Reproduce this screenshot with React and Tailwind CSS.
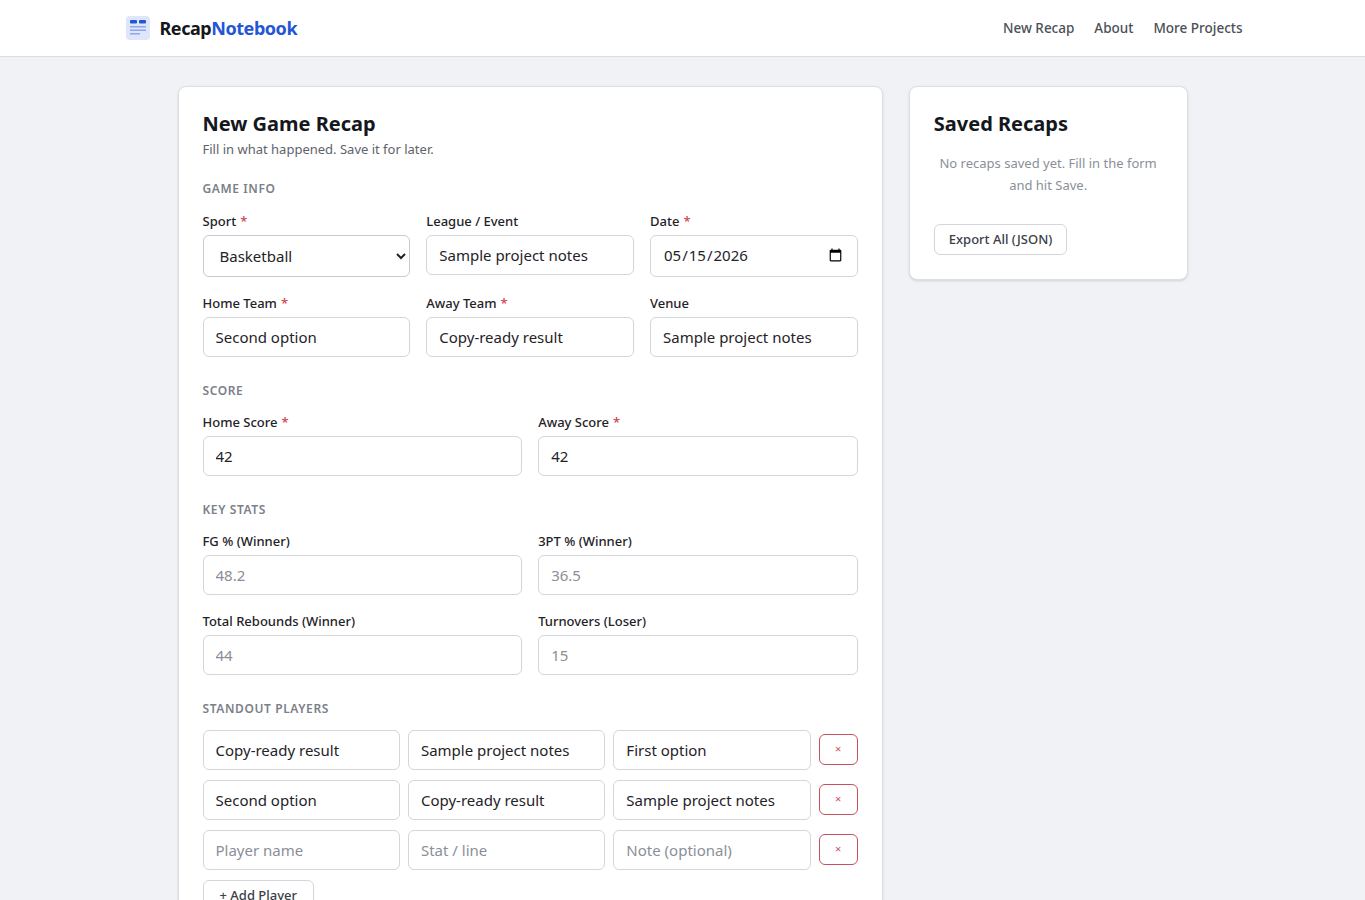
import React from "react";

const inp = "w-full h-10 rounded-md border border-[#d4d6db] bg-white px-3 text-[15px] text-[#1f2328] placeholder:text-[#8a8f98] outline-none";

function Label({ children, req }) {
  return (
    <div className="text-[13px] font-medium text-[#1f2328] mb-1 leading-5">
      {children}
      {req && <span className="text-[#d04050] ml-1">*</span>}
    </div>
  );
}

function Section({ children }) {
  return <div className="text-[12px] font-semibold tracking-wider text-[#7b8089] uppercase">{children}</div>;
}

function Field({ label, req, value, placeholder }) {
  return (
    <div>
      <Label req={req}>{label}</Label>
      <input className={inp} defaultValue={value} placeholder={placeholder} />
    </div>
  );
}

export default function App() {
  const players = [
    ["Copy-ready result", "Sample project notes", "First option"],
    ["Second option", "Copy-ready result", "Sample project notes"],
    ["", "", ""],
  ];
  return (
    <div className="min-h-screen bg-[#f1f2f5]" style={{ fontFamily: '"Noto Sans", "Open Sans", sans-serif' }}>
      <header className="h-[57px] bg-white border-b border-[#dcdee2]">
        <div className="max-w-[1120px] mx-auto h-full flex items-center justify-between">
          <div className="flex items-center gap-[10px] pl-[3px]">
            <svg width="24" height="24" viewBox="0 0 24 24">
              <rect x="0" y="0" width="24" height="24" rx="4" fill="#dfe6fb" />
              <rect x="4" y="4" width="7" height="3.5" rx="1" fill="#2356d6" />
              <rect x="13" y="4" width="7" height="3.5" rx="1" fill="#2356d6" />
              <rect x="4" y="10" width="16" height="1.5" fill="#8ea6ea" />
              <rect x="4" y="13.5" width="16" height="1.5" fill="#8ea6ea" />
              <rect x="4" y="17" width="10" height="1.5" fill="#8ea6ea" />
            </svg>
            <span className="text-[18px] font-bold text-[#14171c] tracking-tight">
              Recap<span className="text-[#2356d6]">Notebook</span>
            </span>
          </div>
          <nav className="flex gap-5 text-[13.5px] font-medium text-[#4b5058]">
            <span>New Recap</span><span>About</span><span>More Projects</span>
          </nav>
        </div>
      </header>
      <main className="max-w-[1010px] mx-auto pt-[29px] flex gap-[26px] items-start">
        <div className="w-[706px] bg-white border border-[#dcdee2] rounded-lg px-6 pt-[23px] pb-10 shadow-sm">
          <h1 className="text-[20px] font-bold text-[#14171c] leading-7">New Game Recap</h1>
          <p className="text-[13px] text-[#5e636b] mt-[2px]">Fill in what happened. Save it for later.</p>
          <div className="mt-[20px]"><Section>Game Info</Section></div>
          <div className="grid grid-cols-3 gap-x-4 gap-y-4 mt-[13px]">
            <div>
              <Label req>Sport</Label>
              <select className="w-full h-[42px] rounded-md border border-[#c8cad0] bg-white px-3 text-[15px] text-[#1f2328]">
                <option>Basketball</option>
              </select>
            </div>
            <Field label="League / Event" value="Sample project notes" />
            <div>
              <Label req>Date</Label>
              <input type="date" className={inp + " h-[42px]"} defaultValue="2026-05-15" />
            </div>
            <Field label="Home Team" req value="Second option" />
            <Field label="Away Team" req value="Copy-ready result" />
            <Field label="Venue" value="Sample project notes" />
          </div>
          <div className="mt-[25px]"><Section>Score</Section></div>
          <div className="grid grid-cols-2 gap-4 mt-[12px]">
            <Field label="Home Score" req value="42" />
            <Field label="Away Score" req value="42" />
          </div>
          <div className="mt-[25px]"><Section>Key Stats</Section></div>
          <div className="grid grid-cols-2 gap-x-4 gap-y-4 mt-[12px]">
            <Field label="FG % (Winner)" placeholder="48.2" />
            <Field label="3PT % (Winner)" placeholder="36.5" />
            <Field label="Total Rebounds (Winner)" placeholder="44" />
            <Field label="Turnovers (Loser)" placeholder="15" />
          </div>
          <div className="mt-[25px]"><Section>Standout Players</Section></div>
          <div className="flex flex-col gap-[10px] mt-[12px]">
            {players.map((p, i) => (
              <div key={i} className="flex gap-2 items-center">
                <input className={inp} defaultValue={p[0]} placeholder="Player name" />
                <input className={inp} defaultValue={p[1]} placeholder="Stat / line" />
                <input className={inp} defaultValue={p[2]} placeholder="Note (optional)" />
                <button className="shrink-0 w-[39px] h-[31px] rounded-md border border-[#c9505a] text-[#c9505a] text-[11px] bg-white">×</button>
              </div>
            ))}
          </div>
          <button className="mt-[10px] h-[32px] px-4 rounded-md border border-[#d4d6db] bg-white text-[13px] font-medium text-[#3b4048]">+ Add Player</button>
        </div>
        <div className="w-[279px] bg-white border border-[#dcdee2] rounded-lg px-6 pt-[23px] pb-[24px] shadow-sm">
          <h2 className="text-[20px] font-bold text-[#14171c] leading-7">Saved Recaps</h2>
          <p className="text-[13px] text-[#8a8f98] text-center leading-[22px] mt-[14px]">No recaps saved yet. Fill in the form and hit Save.</p>
          <button className="mt-[28px] h-[31px] px-[14px] rounded-md border border-[#d4d6db] bg-white text-[13px] font-medium text-[#3b4048]">Export All (JSON)</button>
        </div>
      </main>
    </div>
  );
}
